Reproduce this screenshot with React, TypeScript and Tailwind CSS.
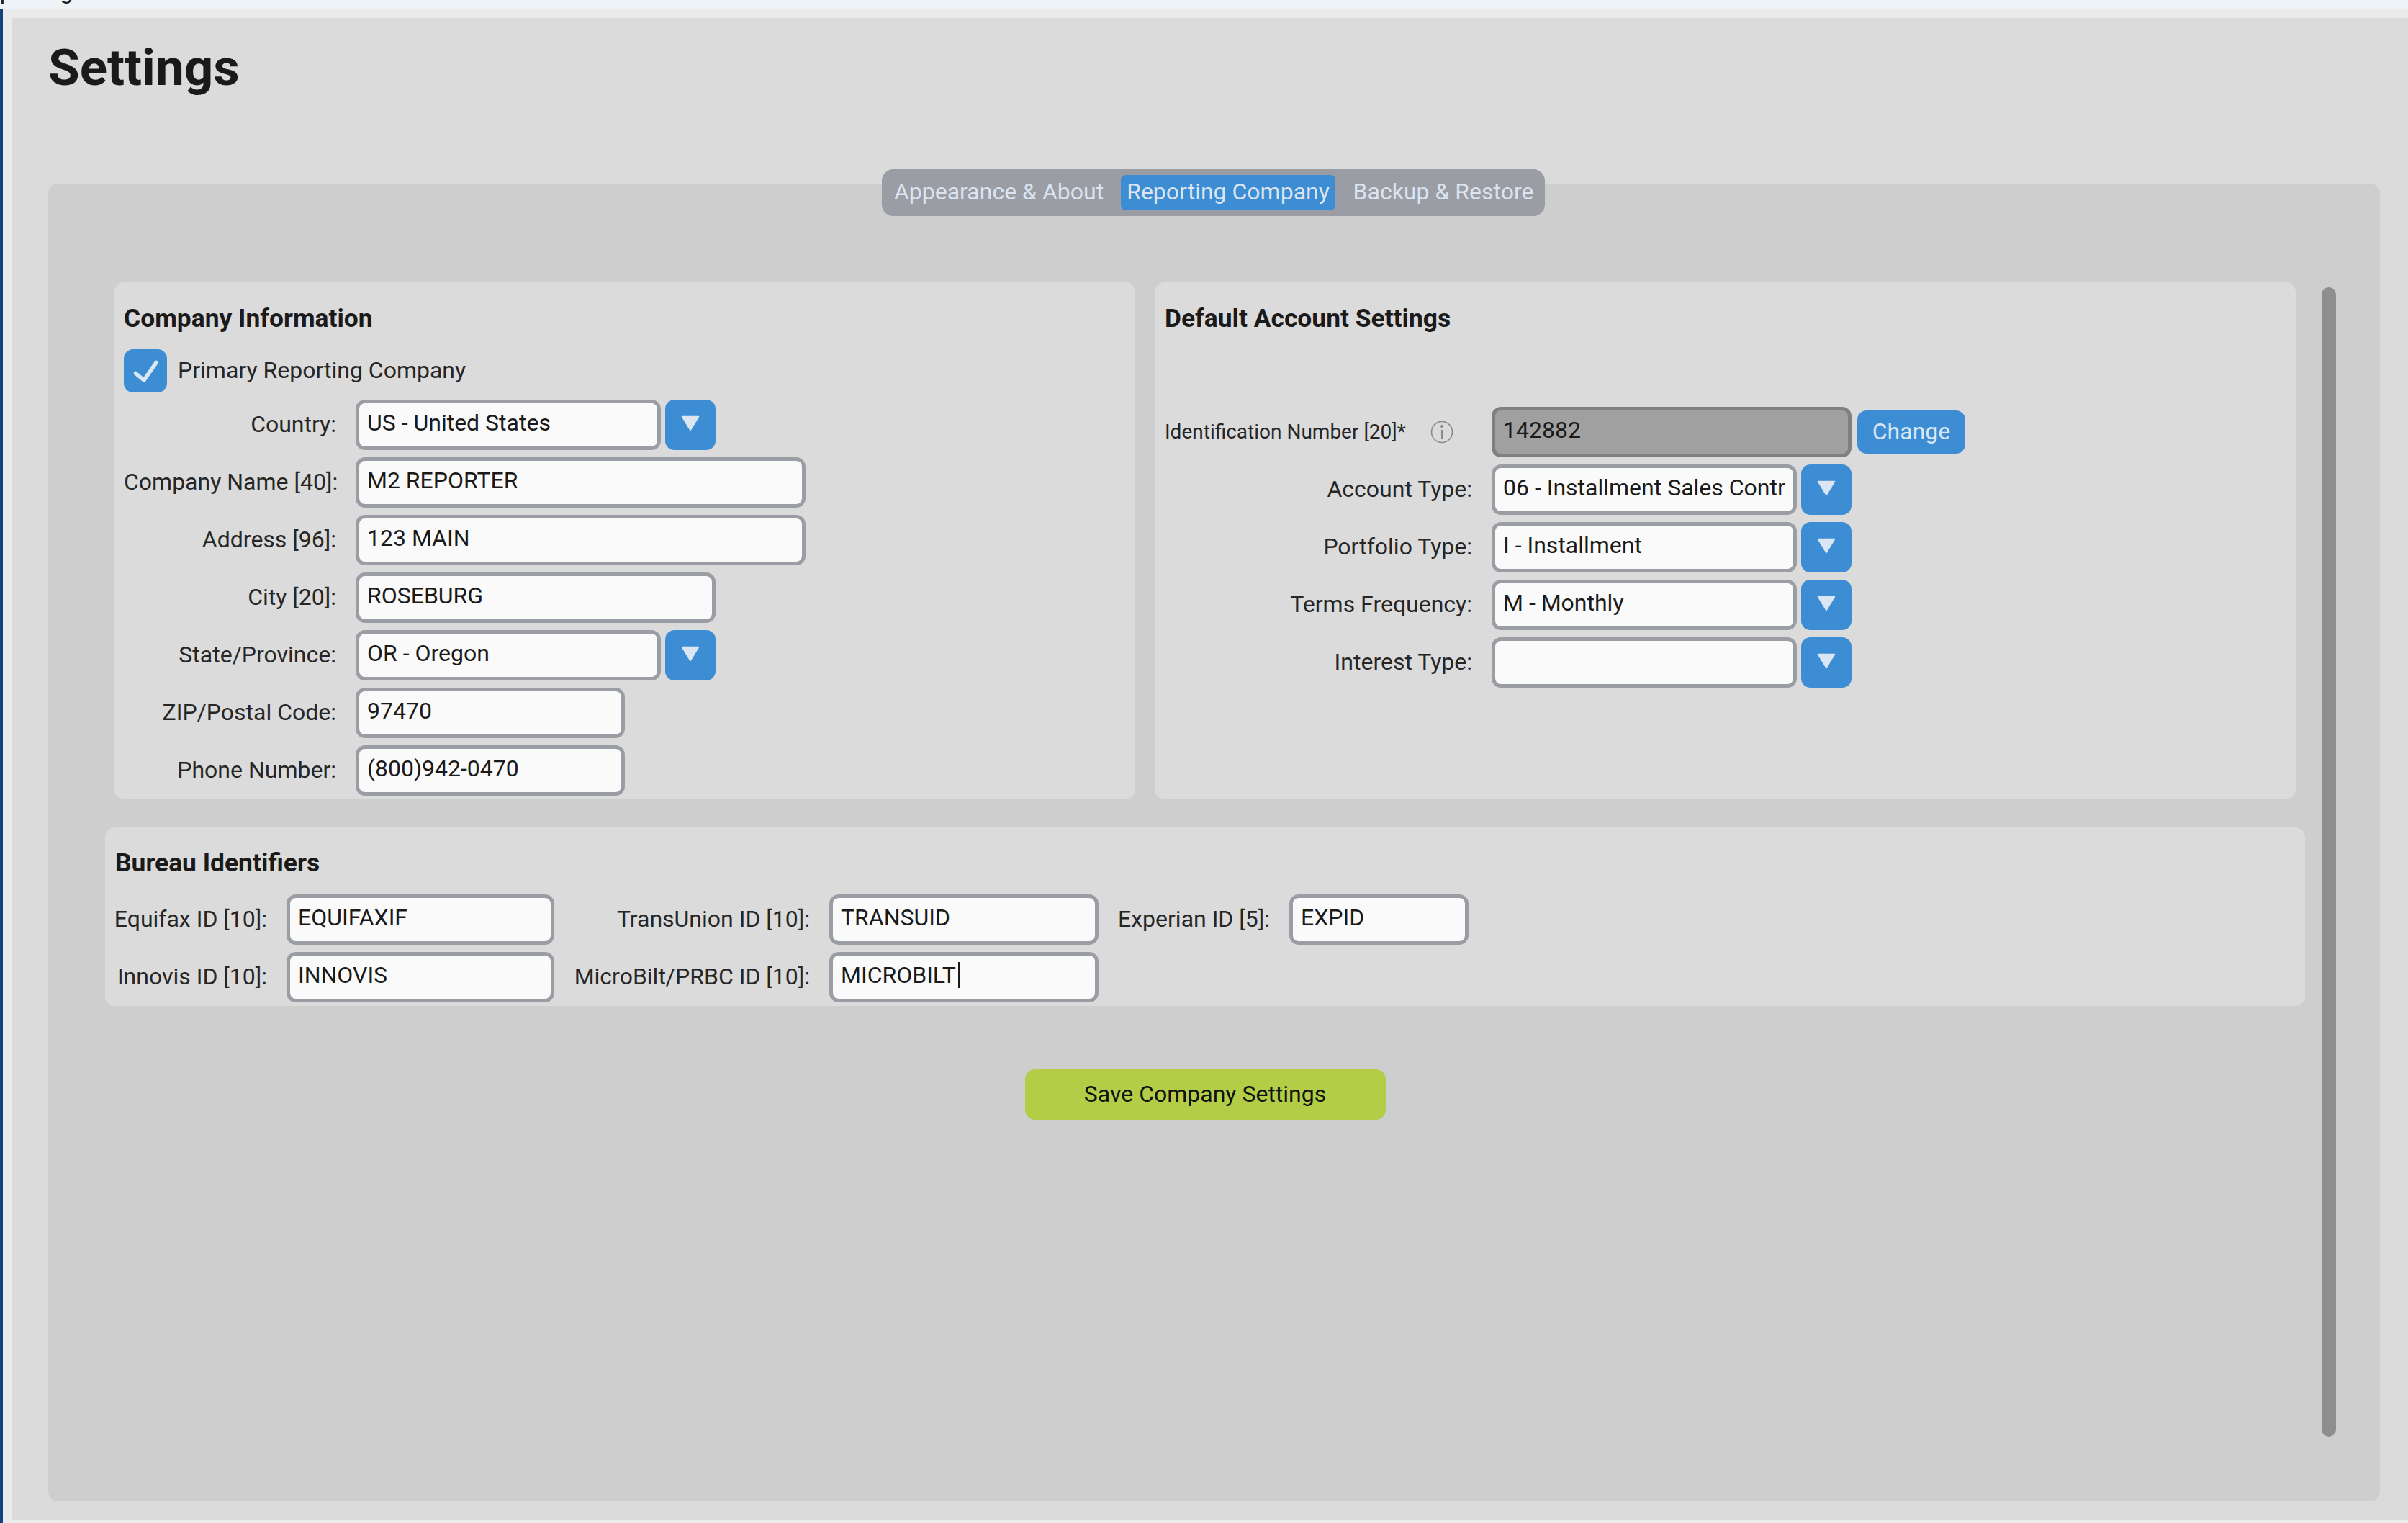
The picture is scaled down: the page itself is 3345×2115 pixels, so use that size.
import React from "react";

function Triangle() {
  return (
    <svg width="26" height="22" viewBox="0 0 26 22" className="block">
      <path d="M1.5 1.5H24.5L13 20.5Z" fill="#dbe6f3" stroke="#dbe6f3" strokeWidth="1.5" strokeLinejoin="round" />
    </svg>
  );
}

function Field({ children, w, caret }: { children?: React.ReactNode; w: string; caret?: boolean }) {
  return (
    <div className={`${w} h-[70px] shrink-0 border-[5px] border-[#9a9da3] rounded-[13px] bg-[#fafafa] pl-[11px] pb-[6px] flex items-center text-[32px] text-[#1a1a1a] overflow-hidden whitespace-nowrap`}>
      {children}
      {caret && <span className="inline-block w-[2px] h-[36px] bg-[#1a1a1a] ml-[3px]" />}
    </div>
  );
}

function Select({ value }: { value?: string }) {
  return (
    <div className="flex gap-[6px]">
      <Field w="w-[424px]">{value}</Field>
      <button className="w-[70px] h-[70px] rounded-[13px] bg-[#3c8dd3] flex items-center justify-center pb-[4px]">
        <Triangle />
      </button>
    </div>
  );
}

function Row({ label, children, col }: { label: string; children: React.ReactNode; col: string }) {
  return (
    <div className="flex items-center">
      <div className={`${col} text-right text-[32px] text-[#262626] whitespace-nowrap pb-[2px]`}>{label}</div>
      {children}
    </div>
  );
}

function BureauLabel({ children }: { children: string }) {
  return (
    <div className="flex items-center justify-end pr-[27px] pb-[2px] text-[32px] text-[#262626] whitespace-nowrap">{children}</div>
  );
}

function Heading({ children }: { children: string }) {
  return <h2 className="h-[48px] pt-[2px] leading-[48px] text-[35.4px] font-bold text-[#1a1a1a]">{children}</h2>;
}

export default function App() {
  return (
    <div className="w-[3345px] h-[2115px] flex flex-col overflow-hidden bg-[#ebebeb] font-['Roboto',sans-serif]">
      <div className="h-[12px] shrink-0 overflow-hidden bg-[#eef3f8]">
        <div className="-mt-[31px] -ml-[37px] text-[32px] leading-[38px] text-[#1a1a1a]">Reporting</div>
      </div>
      <div className="flex-1 flex min-h-0">
        <div className="w-[4px] bg-[#13447c]" />
        <div className="flex-1 pl-[13px] pt-[13px] pb-[4px] min-w-0">
          <main className="h-full bg-[#dbdbdb] pl-[50px] pr-[39px] pt-[40px] pb-[26px] flex flex-col">
            <h1 className="h-[80px] pt-[2px] text-[71px] leading-[80px] font-bold text-[#1a1a1a] -mt-[13px]">Settings</h1>
            <div className="relative flex-1 mt-[123px] rounded-[14px] bg-[#cecece] pt-[137px] pl-[79px]">
              <nav className="absolute -top-[20px] left-[1158px] h-[65px] flex items-center rounded-[16px] bg-[#9a9da3] pl-[8px] pr-[7px] text-[32px] text-[#dbe4f0] whitespace-nowrap">
                <span className="w-[309px] text-center pb-[3px]">Appearance &amp; About</span>
                <span className="w-[298px] h-[49px] ml-[15px] pb-[3px] flex items-center justify-center rounded-[7px] bg-[#3c8dd3]">Reporting Company</span>
                <span className="w-[268px] ml-[16px] text-center pb-[3px]">Backup &amp; Restore</span>
              </nav>

              <div className="absolute left-[3158px] top-[144px] w-[20px] h-[1596px] rounded-full bg-[#8e8e8e]" />

              <div className="w-[3056px] flex flex-col">
                <div className="flex gap-[27px] ml-[13px]">
                  <section className="w-[1418px] h-[718px] rounded-[14px] bg-[#dbdbdb] pl-[13px] pt-[24px]">
                    <Heading>Company Information</Heading>
                    <div className="flex items-center gap-[15px] mt-[21px] mb-[10px] h-[60px]">
                      <div className="w-[60px] h-[60px] rounded-[13px] bg-[#3c8dd3]">
                        <svg width="60" height="60" viewBox="0 0 60 60" className="block">
                          <path d="M16.5 33.5L28 43L45 18.5" fill="none" stroke="#dbe8f4" strokeWidth="5.5" strokeLinecap="round" strokeLinejoin="round" />
                        </svg>
                      </div>
                      <span className="text-[32px] text-[#262626] pb-[2px]">Primary Reporting Company</span>
                    </div>
                    <div className="flex flex-col gap-[10px]">
                      <Row label="Country:" col="w-[295px] mr-[27px]"><Select value="US - United States" /></Row>
                      <Row label="Company Name [40]:" col="w-[295px] mr-[27px]"><Field w="w-[625px]">M2 REPORTER</Field></Row>
                      <Row label="Address [96]:" col="w-[295px] mr-[27px]"><Field w="w-[625px]">123 MAIN</Field></Row>
                      <Row label="City [20]:" col="w-[295px] mr-[27px]"><Field w="w-[500px]">ROSEBURG</Field></Row>
                      <Row label="State/Province:" col="w-[295px] mr-[27px]"><Select value="OR - Oregon" /></Row>
                      <Row label="ZIP/Postal Code:" col="w-[295px] mr-[27px]"><Field w="w-[374px]">97470</Field></Row>
                      <Row label="Phone Number:" col="w-[295px] mr-[27px]"><Field w="w-[374px]">(800)942-0470</Field></Row>
                    </div>
                  </section>

                  <section className="w-[1585px] h-[718px] rounded-[14px] bg-[#dbdbdb] pl-[14px] pt-[24px]">
                    <Heading>Default Account Settings</Heading>
                    <div className="flex items-center mt-[101px] mb-[10px]">
                      <div className="w-[454px] flex items-center">
                        <span className="w-[369px] text-[28px] text-[#262626] whitespace-nowrap">Identification Number [20]*</span>
                        <svg width="32" height="32" viewBox="0 0 32 32" className="block">
                          <circle cx="16" cy="16" r="14.5" fill="none" stroke="#85898f" strokeWidth="1.6" />
                          <circle cx="16" cy="8" r="2" fill="#85898f" />
                          <path d="M16 13V25" stroke="#85898f" strokeWidth="2" />
                        </svg>
                      </div>
                      <div className="w-[500px] h-[70px] border-[5px] border-[#808080] rounded-[13px] bg-[#a0a0a0] pl-[11px] pb-[6px] flex items-center text-[32px] text-[#1a1a1a]">142882</div>
                      <button className="w-[150px] h-[60px] ml-[8px] pb-[2px] rounded-[13px] bg-[#3c8dd3] text-[32px] text-[#dbe6f3]">Change</button>
                    </div>
                    <div className="flex flex-col gap-[10px]">
                      <Row label="Account Type:" col="w-[427px] mr-[27px]"><Select value="06 - Installment Sales Contr" /></Row>
                      <Row label="Portfolio Type:" col="w-[427px] mr-[27px]"><Select value="I - Installment" /></Row>
                      <Row label="Terms Frequency:" col="w-[427px] mr-[27px]"><Select value="M - Monthly" /></Row>
                      <Row label="Interest Type:" col="w-[427px] mr-[27px]"><Select /></Row>
                    </div>
                  </section>
                </div>

                <section className="h-[248px] mt-[39px] rounded-[14px] bg-[#dbdbdb] pl-[14px] pt-[23px]">
                  <Heading>Bureau Identifiers</Heading>
                  <div className="grid grid-cols-[238px_372px_382px_374px_265px_249px] gap-y-[10px] mt-[22px] w-max">
                    <BureauLabel>Equifax ID [10]:</BureauLabel>
                    <Field w="w-full">EQUIFAXIF</Field>
                    <BureauLabel>TransUnion ID [10]:</BureauLabel>
                    <Field w="w-full">TRANSUID</Field>
                    <BureauLabel>Experian ID [5]:</BureauLabel>
                    <Field w="w-full">EXPID</Field>
                    <BureauLabel>Innovis ID [10]:</BureauLabel>
                    <Field w="w-full">INNOVIS</Field>
                    <BureauLabel>MicroBilt/PRBC ID [10]:</BureauLabel>
                    <Field w="w-full" caret>MICROBILT</Field>
                  </div>
                </section>

                <button className="self-center w-[501px] h-[70px] mt-[88px] pb-[2px] rounded-[14px] bg-[#b3cd47] text-[32px] text-[#111111]">Save Company Settings</button>
              </div>
            </div>
          </main>
        </div>
      </div>
    </div>
  );
}
